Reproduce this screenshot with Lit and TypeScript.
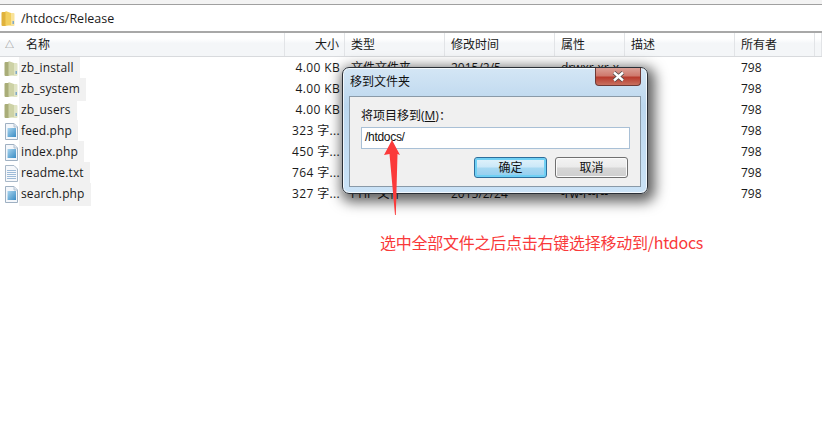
import { LitElement, html, css, svg } from "lit";
import { customElement } from "lit/decorators.js";

const cols = [
  { label: "大小", cls: "right" },
  { label: "类型", cls: "" },
  { label: "修改时间", cls: "" },
  { label: "属性", cls: "" },
  { label: "描述", cls: "" },
  { label: "所有者", cls: "" },
];

const rows = [
  ["folder", "zb_install", "4.00 KB", "文件文件夹", "2015/2/5", "drwxr-xr-x", "798"],
  ["folder", "zb_system", "4.00 KB", "文件文件夹", "2015/2/5", "drwxr-xr-x", "798"],
  ["folder", "zb_users", "4.00 KB", "文件文件夹", "2015/2/5", "drwxr-xr-x", "798"],
  ["php", "feed.php", "323 字...", "PHP 文件", "2015/2/24", "-rw-r--r--", "798"],
  ["php", "index.php", "450 字...", "PHP 文件", "2015/2/24", "-rw-r--r--", "798"],
  ["txt", "readme.txt", "764 字...", "TXT 文件", "2015/2/24", "-rw-r--r--", "798"],
  ["php", "search.php", "327 字...", "PHP 文件", "2015/2/24", "-rw-r--r--", "798"],
];

const folderIcon = (a: string, b: string, c: string) => svg`
  <svg class="ico" width="14" height="17" viewBox="0 0 14 17">
    <path d="M.5 3 L.5 15 Q.5 16 1.5 16 L5 16 L5 2 L1.5 2 Q.5 2 .5 3 Z" fill="${b}"/>
    <path d="M4.5 1 L10 3 L10 15 L4.5 16 Z" fill="${a}"/>
    <path d="M10 3 L12.5 3 Q13.5 3 13.5 4 L13.5 15 Q13.5 16 12.5 16 L5 16 L10 15 Z" fill="${c}"/>
    <rect x="11.5" y="11" width="1.5" height="3" fill="#7fa8c8"/>
  </svg>`;

const phpIcon = svg`
  <svg class="ico" width="14" height="17" viewBox="0 0 14 17">
    <defs>
      <linearGradient id="blue" x1="0" y1="0" x2="1" y2="1">
        <stop offset="0" stop-color="#a8d4ee"/>
        <stop offset="1" stop-color="#3a8cc4"/>
      </linearGradient>
    </defs>
    <path d="M1.5 .5 H10 L13.5 4 V16.5 H1.5 Z" fill="#f4f7fb" stroke="#9fb0c2"/>
    <path d="M10 .5 V4 H13.5" fill="#dfe7f0" stroke="#b4c2d0"/>
    <rect x="3.5" y="5" width="8.5" height="9" fill="url(#blue)"/>
  </svg>`;

const txtIcon = svg`
  <svg class="ico" width="14" height="17" viewBox="0 0 14 17">
    <path d="M1.5 .5 H10 L13.5 4 V16.5 H1.5 Z" fill="#f6f8fb" stroke="#a8b8c8"/>
    <path d="M3 5.5H12M3 7.5H12M3 9.5H12M3 11.5H12M3 13.5H12" stroke="#9dbbd8" stroke-width="1"/>
  </svg>`;

const icon = (k: string) =>
  k === "folder" ? folderIcon("#cdd2a6", "#a9ad78", "#e0e4c4") : k === "php" ? phpIcon : txtIcon;

@customElement("app-root")
export class AppRoot extends LitElement {
  static styles = css`
    :host {
      display: block;
      width: 822px;
      height: 423px;
      position: relative;
      overflow: hidden;
      background: #fff;
      font-family: "Open Sans", "Noto Sans CJK SC", sans-serif;
      font-size: 12px;
      color: #1a1a1a;
    }
    .top {
      height: 4px;
      background: #f3f3f3;
      border-bottom: 1px solid #a0a0a0;
    }
    .path {
      height: 26px;
      display: flex;
      align-items: center;
      gap: 6px;
      padding-left: 1px;
      border-bottom: 2px solid #a8a8a8;
      font-size: 12.5px;
    }
    .head {
      height: 23px;
      display: grid;
      grid-template-columns: 285px 60px 100px 110px 70px 110px 80px 1fr;
      background: linear-gradient(#fff 0 25%, #f4f6f8 45%, #f4f6f8);
      border-bottom: 1px solid #d8dadd;
      line-height: 24px;
    }
    .hc {
      border-right: 1px solid #e2e4e7;
      padding-left: 6px;
      overflow: hidden;
      white-space: nowrap;
    }
    .hc.right {
      text-align: right;
      padding: 0 5px 0 0;
    }
    .name-h {
      display: flex;
      gap: 14px;
      padding-left: 5px;
    }
    .sort {
      color: #808080;
      width: 7px;
      font-size: 9px;
    }
    .row {
      height: 21px;
      display: grid;
      grid-template-columns: 285px 60px 100px 110px 70px 110px 80px 1fr;
      line-height: 21px;
      white-space: nowrap;
    }
    .cell {
      padding-left: 6px;
      overflow: hidden;
    }
    .cell.size {
      padding: 0 5px 0 0;
      text-align: right;
      letter-spacing: 0.35px;
    }
    .name {
      display: flex;
      align-items: center;
      padding-left: 4px;
    }
    .ico {
      display: block;
      flex: none;
    }
    .name .ico {
      margin-right: 1px;
    }
    .hl {
      background: #f1f1f1;
      padding: 0 6px 0 2px;
      height: 23px;
      line-height: 22px;
      letter-spacing: 0.12px;
    }
    .dialog {
      position: absolute;
      left: 342px;
      top: 67px;
      width: 306px;
      height: 127px;
      box-sizing: border-box;
      border: 1px solid #2a2f36;
      border-radius: 7px;
      background: linear-gradient(#d4e6f5, #bcd7ee 30%, #cbe3f7 100%);
      box-shadow: 3px 4px 13px 4px rgba(0, 0, 0, 0.62), inset 0 0 0 1px rgba(255, 255, 255, 0.75);
    }
    .title {
      position: absolute;
      left: 7px;
      top: 5px;
      font-size: 12px;
      line-height: 18px;
      color: #111;
    }
    .close {
      position: absolute;
      right: 6px;
      top: 0;
      width: 46px;
      height: 18px;
      box-sizing: border-box;
      border: 1px solid #6e3a36;
      border-top: none;
      border-radius: 0 0 4px 4px;
      background: linear-gradient(#dba096, #cf7a6e 45%, #b83c2e 55%, #c8705f);
      display: flex;
      align-items: center;
      justify-content: center;
    }
    .panel {
      position: absolute;
      left: 6px;
      top: 28px;
      width: 292px;
      height: 91px;
      box-sizing: border-box;
      border: 1px solid #8a9aa8;
      background: #f0f0f0;
      padding: 10px 11px 0 11px;
      display: flex;
      flex-direction: column;
    }
    .lbl {
      font-size: 12px;
      line-height: 18px;
      height: 18px;
      color: #111;
    }
    .lbl u {
      text-underline-offset: 1px;
    }
    .input {
      height: 22px;
      margin-top: 2px;
      box-sizing: border-box;
      border: 1px solid #a9c0d6;
      background: #fff;
      line-height: 19px;
      padding-left: 3px;
      width: 269px;
      color: #111;
      font-family: "Liberation Sans", sans-serif;
      letter-spacing: -0.3px;
    }
    .btns {
      display: flex;
      justify-content: flex-end;
      gap: 8px;
      margin-top: 8px;
      width: 267px;
    }
    .btn {
      width: 73px;
      height: 21px;
      box-sizing: border-box;
      border: 1px solid #707070;
      border-radius: 3px;
      text-align: center;
      line-height: 20px;
      background: linear-gradient(#f3f3f3, #ebebeb 48%, #d6d6d6 52%, #cfcfcf);
      box-shadow: inset 0 0 0 1px #fbfbfb;
      color: #111;
    }
    .btn.def {
      border-color: #2c6e9c;
      background: linear-gradient(#e2f3fb, #cbe8f8 48%, #a8d9f2 52%, #93cdee);
      box-shadow: inset 0 0 0 2px #6fd0f4;
    }
    .arrow {
      position: absolute;
      left: 380px;
      top: 138px;
    }
    .note {
      position: absolute;
      left: 380px;
      top: 232px;
      color: #f9393a;
      font-size: 16px;
      line-height: 20px;
      white-space: nowrap;
      font-family: "Noto Sans CJK SC", sans-serif;
      font-weight: 400;
      letter-spacing: -0.25px;
    }
  `;

  render() {
    return html`
      <div class="top"></div>
      <div class="path">
        ${folderIcon("#f2cf5e", "#e0b23c", "#f9e39a")}
        <span>/htdocs/Release</span>
      </div>
      <div class="head">
        <div class="hc name-h"><span class="sort">△</span><span>名称</span></div>
        ${cols.map((c) => html`<div class="hc ${c.cls}">${c.label}</div>`)}
        <div class="hc"></div>
      </div>
      ${rows.map(
        (r) => html`
          <div class="row">
            <div class="name">${icon(r[0])}<span class="hl">${r[1]}</span></div>
            <div class="cell size">${r[2]}</div>
            <div class="cell">${r[3]}</div>
            <div class="cell">${r[4]}</div>
            <div class="cell">${r[5]}</div>
            <div class="cell"></div>
            <div class="cell">${r[6]}</div>
            <div></div>
          </div>
        `
      )}
      <div class="dialog">
        <div class="title">移到文件夹</div>
        <div class="close">
          <svg width="13" height="11" viewBox="0 0 13 11">
            <path d="M2 1.5 L11 9.5 M11 1.5 L2 9.5" stroke="#4a4a4a" stroke-width="4"/>
            <path d="M2 1.5 L11 9.5 M11 1.5 L2 9.5" stroke="#fff" stroke-width="2.4"/>
          </svg>
        </div>
        <div class="panel">
          <div class="lbl">将项目移到(<u>M</u>)：</div>
          <div class="input">/htdocs/</div>
          <div class="btns">
            <div class="btn def">确定</div>
            <div class="btn">取消</div>
          </div>
        </div>
      </div>
      <svg class="arrow" width="24" height="80" viewBox="0 0 24 80">
        <path d="M12 2 L4 17 L9.5 16 L15 77 L15.8 77 L17.5 16 L20 17 Z" fill="#fb3a3a"/>
      </svg>
      <div class="note">选中全部文件之后点击右键选择移动到/htdocs</div>
    `;
  }
}
